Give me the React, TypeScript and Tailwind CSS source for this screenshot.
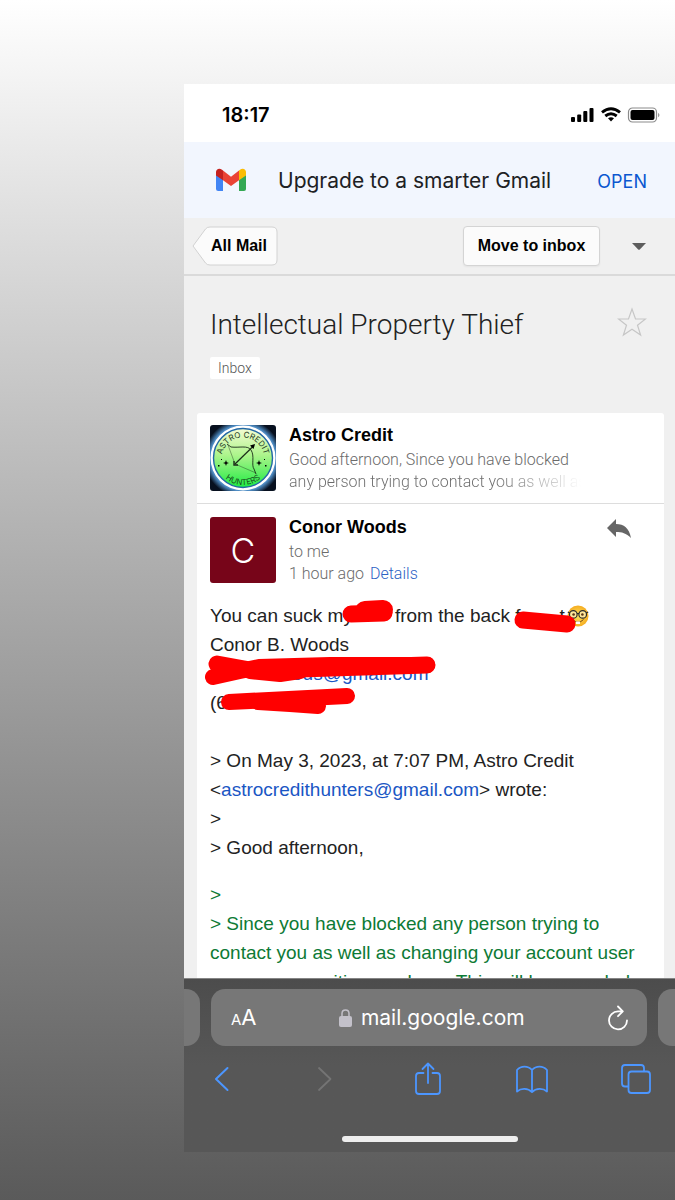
import type { ReactNode } from 'react';

function StatusBar() {
  return (
    <header className="flex h-[58px] shrink-0 items-center justify-between bg-white pl-[38px] pr-[15px] pt-[3px]">
      <time className="font-['Inter'] text-[20px] font-semibold leading-6 text-black">18:17</time>
      <div className="flex items-center gap-[6px]">
        <svg width="24" height="16" viewBox="0 0 24 16" aria-label="Signal">
          <rect x="0" y="10" width="4" height="5" rx="1" />
          <rect x="6.2" y="7.5" width="4" height="7.5" rx="1" />
          <rect x="12.3" y="4" width="4" height="11" rx="1" />
          <rect x="18.5" y="1" width="4" height="14" rx="1" />
        </svg>
        <svg width="20" height="16" viewBox="0 0 20 16" fill="none" stroke="#000" strokeWidth="2.9" aria-label="Wi-Fi">
          <path d="M1 5.4Q10-2 19 5.4" />
          <path d="M4.3 9Q10 4.4 15.7 9" />
          <path d="M7 11.3Q10 9 13 11.3L10 14.6Z" fill="#000" stroke="none" />
        </svg>
        <svg width="33" height="16" viewBox="0 0 33 16" aria-label="Battery">
          <rect x="1.5" y="1" width="28" height="14" rx="4" fill="none" stroke="#8b8b8b" strokeWidth="1.2" />
          <rect x="3.5" y="3" width="24" height="10" rx="2" />
          <path d="M31 5.7Q34 8 31 10.3Z" fill="#999" />
        </svg>
      </div>
    </header>
  );
}

function GmailLogo() {
  return (
    <svg width="30" height="24" viewBox="0 0 30 24" aria-label="Gmail">
      <path d="M0 6L7 11V23H2.2Q0 23 0 21Z" fill="#4285f4" />
      <path d="M23 11L30 6V21Q30 23 28 23H23Z" fill="#34a853" />
      <path d="M0 8V4C0 .8 3.5-.4 6 1.7L7 2.5V12.3L0 7.5Z" fill="#c5221f" />
      <path d="M23 2.5L24 1.7C26.5-.4 30 .8 30 4V7.5L23 12.3Z" fill="#fbbc04" />
      <path d="M7 2.5L15 8.8L23 2.5V12.3L15 18L7 12.3Z" fill="#ea4335" />
    </svg>
  );
}

function UpgradeBanner() {
  return (
    <div className="flex h-[76px] shrink-0 items-center bg-[#f2f6fe] pl-8 pr-7">
      <GmailLogo />
      <p className="ml-8 flex-1 whitespace-nowrap pt-[2px] font-['Inter'] text-[21px] leading-7 text-[#202124]">
        Upgrade to a smarter Gmail
      </p>
      <button className="pt-1 font-['Inter'] text-[18px] leading-6 text-[#0b57d0]">OPEN</button>
    </div>
  );
}

function Toolbar() {
  return (
    <nav className="flex h-[58px] shrink-0 items-center border-b-2 border-[#dadada] pl-2 pr-[29px]">
      <button className="relative h-10 w-[86px] pl-2 text-[16px] font-bold text-black">
        <svg className="absolute inset-0" width="86" height="40" viewBox="0 0 86 40" aria-hidden="true">
          <path
            d="M1 20L13.5 3Q15 1 18 1H80Q85 1 85 6V34Q85 39 80 39H18Q15 39 13.5 37Z"
            fill="#fbfbfb"
            stroke="#d2d2d2"
          />
        </svg>
        <span className="relative">All Mail</span>
      </button>
      <button className="ml-auto h-10 w-[137px] rounded-[4px] border border-[#d4d4d4] bg-[#fbfbfb] text-[16px] font-bold text-black shadow-xs">
        Move to inbox
      </button>
      <button className="ml-8 flex h-10 w-[14px] items-center" aria-label="More actions">
        <svg width="14" height="7" viewBox="0 0 14 7">
          <path d="M0 0H14L7.8 6.4Q7 7 6.2 6.4Z" fill="#5d5d5d" />
        </svg>
      </button>
    </nav>
  );
}

function Subject() {
  return (
    <section className="flex justify-between pb-[33px] pl-[26px] pr-7 pt-[31px]">
      <div>
        <h1 className="whitespace-nowrap font-['Roboto'] text-[28px] font-light leading-9 text-[#222]">Intellectual Property Thief</h1>
        <span className="mt-[14px] inline-block h-[22px] rounded-[2px] bg-white px-2 font-['Roboto'] text-[14px] font-light leading-[22px] text-[#555]">
          Inbox
        </span>
      </div>
      <button className="h-7 w-[30px]" aria-label="Star">
        <svg width="30" height="30" viewBox="0 0 30 30" fill="none" stroke="#c6c6c6" strokeWidth="1.2">
          <path d="M15 2L18.5 12H28.5L20.5 18.2L23.6 28L15 22.2L6.4 28L9.5 18.2L1.5 12H11.5Z" />
        </svg>
      </button>
    </section>
  );
}

function AstroAvatar() {
  return (
    <svg className="shrink-0 rounded-[3px]" width="66" height="66" viewBox="0 0 66 66" aria-label="Astro Credit Hunters">
      <defs>
        <radialGradient id="glow">
          <stop offset="0.85" stopColor="#4e8cc4" />
          <stop offset="1" stopColor="#07101f" />
        </radialGradient>
        <linearGradient id="disc" x2="0" y2="1">
          <stop stopColor="#f4fbd2" />
          <stop offset="0.45" stopColor="#adf48c" />
          <stop offset="1" stopColor="#1eeb43" />
        </linearGradient>
        <path id="arcTop" d="M11.5 34A21.5 21.5 0 0 1 54.5 34" />
        <path id="arcBottom" d="M6 33A27 27 0 0 0 60 33" />
      </defs>
      <rect width="66" height="66" fill="#07101f" />
      <circle cx="33" cy="33" r="39" fill="url(#glow)" />
      <circle cx="33" cy="33" r="32.5" fill="#fff" />
      <circle cx="33" cy="33" r="29.5" fill="url(#disc)" stroke="#2368a5" strokeWidth="1.4" />
      <text fontFamily="Inter" fontSize="8" fill="#243a24" textAnchor="middle">
        <textPath href="#arcTop" startOffset="50%">ASTRO CREDIT</textPath>
      </text>
      <text fontFamily="Inter" fontSize="8" fill="#164d1d" textAnchor="middle">
        <textPath href="#arcBottom" startOffset="50%">HUNTERS</textPath>
      </text>
      <g fill="none" stroke="#1a2b19" strokeWidth="0.9">
        <path d="M25 39L44 20.5" strokeWidth="1.2" />
        <path d="M18 20L25 39L46 48" strokeWidth="0.4" />
        <path d="M17 19L21 22C29 23 38 20 41 25C45 31 41 40 44 44L46 49" />
        <path d="M24 36V40H28" strokeWidth="1.4" />
      </g>
      <path d="M45 19L43.5 24L40 20.5ZM16 35L16.8 37.2L19 38L16.8 38.8L16 41L15.2 38.8L13 38L15.2 37.2ZM49 35L49.8 37.2L52 38L49.8 38.8L49 41L48.2 38.8L46 38L48.2 37.2Z" />
      <path d="M8 40h1.5v1.5H8ZM11 34h1v1h-1ZM55 40h1.5v1.5H55ZM54 34h1v1h-1Z" />
    </svg>
  );
}

function MessagePreview() {
  return (
    <article className="flex gap-[13px] border-b border-[#ddd] px-[13px] pb-[10px] pt-3">
      <AstroAvatar />
      <div className="min-w-0 flex-1">
        <h2 className="text-[18px] font-bold leading-5 text-black">Astro Credit</h2>
        <p className="mt-1 w-[292px] font-['Roboto'] text-[16px] font-light leading-[22px] text-[#6b6b6b]">
          <span className="block whitespace-nowrap">Good afternoon, Since you have blocked</span>
          <span className="block whitespace-nowrap bg-linear-to-r from-[#6b6b6b] from-70% to-white bg-clip-text text-transparent">
            any person trying to contact you as well as
          </span>
        </p>
      </div>
    </article>
  );
}

function NerdFace() {
  return (
    <svg className="ml-[2px] inline-block align-[-5px]" width="22" height="22" viewBox="0 0 22 22" role="img" aria-label="nerd face">
      <defs>
        <radialGradient id="face">
          <stop stopColor="#ffe45c" />
          <stop offset="1" stopColor="#f5ad22" />
        </radialGradient>
      </defs>
      <circle cx="11" cy="11" r="10.5" fill="url(#face)" />
      <g fill="#ffe79b" stroke="#292929" strokeWidth="1.2">
        <circle cx="6.3" cy="9.4" r="3.8" />
        <circle cx="15.7" cy="9.4" r="3.8" />
        <path d="M10 8.5H12M.8 7L2.8 8M21.2 7L19.2 8" fill="none" />
      </g>
      <circle cx="6.6" cy="9.5" r="1.3" fill="#5b3517" />
      <circle cx="15.4" cy="9.5" r="1.3" fill="#5b3517" />
      <path d="M5.5 14.5Q11 20 16.5 14.5" fill="none" stroke="#744214" />
      <path d="M9 16.5H13V19H9Z" fill="#fff" />
    </svg>
  );
}

function Line({ children }: { children?: ReactNode }) {
  return <div className="h-[29px] whitespace-nowrap">{children}</div>;
}

function Redactions() {
  return (
    <svg className="absolute left-0 top-0" width="467" height="130" viewBox="197 595 467 130" fill="none" aria-hidden="true">
      <g stroke="#f00" strokeLinecap="round" strokeLinejoin="round">
        <path d="M365 611L383 610" strokeWidth="20" />
        <path d="M351 614L384 613" strokeWidth="17" />
        <path d="M523 620L567 624" strokeWidth="17" />
        <path d="M217 664L250 670L300 669L427 665" strokeWidth="17" />
        <path d="M213 677L240 671L259 667L330 665L427 665" strokeWidth="16" />
        <path d="M250 671L280 674L300 671" strokeWidth="16" />
        <path d="M229 702L347 696" strokeWidth="16" />
        <path d="M258 702L290 704L318 706" strokeWidth="16" />
      </g>
    </svg>
  );
}

function MessageBody() {
  return (
    <div className="relative -mt-[1px] px-[13px] pt-[6px] text-[19px] leading-[29px] text-[#222]">
      <Line>
        You can suck my
        <span className="inline-block w-[42px]" />
        from the back f
        <span className="inline-block w-[39px]" />t
        <NerdFace />
      </Line>
      <Line>Conor B. Woods</Line>
      <Line>
        <span className="inline-block w-[82px]" />
        <span className="text-[#1a56c4]">ods@gmail.com</span>
      </Line>
      <Line>(6</Line>
      <Line />
      <Line>&gt; On May 3, 2023, at 7:07 PM, Astro Credit</Line>
      <Line>
        &lt;
        <a href="mailto:astrocredithunters@gmail.com" className="text-[#1a56c4]">
          astrocredithunters@gmail.com
        </a>
        &gt; wrote:
      </Line>
      <Line>&gt;</Line>
      <Line>&gt; Good afternoon,</Line>
      <div className="mt-[18px] text-[#0d7a35]">
        <Line>&gt;</Line>
        <Line>&gt; Since you have blocked any person trying to</Line>
        <Line>contact you as well as changing your account user</Line>
        <Line>name across cities nowhere. This will be recorded</Line>
      </div>
      <Redactions />
    </div>
  );
}

function OpenMessage() {
  return (
    <article>
      <div className="flex gap-[13px] px-[13px] pb-[11px] pt-[13px]">
        <div className="flex size-[66px] shrink-0 items-center justify-center rounded-[3px] bg-[#770519] font-['Inter'] text-[34px] font-light text-white">
          C
        </div>
        <div className="min-w-0 flex-1">
          <h2 className="text-[18px] font-bold leading-5 text-black">Conor Woods</h2>
          <p className="mt-1 font-['Roboto'] text-[16px] font-light leading-[22px] text-[#6b6b6b]">to me</p>
          <p className="font-['Roboto'] text-[16px] font-light leading-[22px] text-[#6b6b6b]">
            1 hour ago{' '}
            <a href="#details" className="ml-[2px] text-[#2c62c4]">
              Details
            </a>
          </p>
        </div>
        <button className="mr-5 h-6 w-6" aria-label="Reply">
          <svg width="24" height="20" viewBox="0 0 24 20">
            <path d="M9 0V5C17 5 22 9 24 19C19 14 15 13 9 13V18L0 9Z" fill="#666" />
          </svg>
        </button>
      </div>
      <MessageBody />
    </article>
  );
}

function BrowserBar() {
  return (
    <footer className="shrink-0 border-t border-[#858585] bg-linear-to-b from-[#4c4c4c] to-[#575757] to-50% pb-[10px] text-white">
      <div className="flex gap-[11px] pt-[10px]">
        <div className="h-[57px] w-4 shrink-0 rounded-r-[14px] bg-[#777]" />
        <div className="flex h-[57px] min-w-0 flex-1 items-center rounded-[14px] bg-[#777] pl-5 pr-[18px] font-['Inter']">
          <button className="flex items-baseline" aria-label="Page settings">
            <span className="text-[15px]">A</span>
            <span className="text-[22px]">A</span>
          </button>
          <div className="flex flex-1 items-center justify-center gap-[9px]">
            <svg width="13" height="18" viewBox="0 0 13 18" fill="#c3c1ca" aria-hidden="true">
              <rect y="7" width="13" height="11" rx="2" />
              <path d="M3 8V4.5C3-.2 10-.2 10 4.5V8" fill="none" stroke="#c3c1ca" strokeWidth="1.5" />
            </svg>
            <span className="text-[21px]">mail.google.com</span>
          </div>
          <button aria-label="Reload">
            <svg width="22" height="26" viewBox="0 0 22 26" fill="none" stroke="#fff" strokeWidth="1.8" strokeLinecap="round" strokeLinejoin="round">
              <path d="M15.5 6.4H11A9 9 0 1 0 20 15.5M11 1.5L15.8 6.4L11 11.2" />
            </svg>
          </button>
        </div>
        <div className="h-[57px] w-[17px] shrink-0 rounded-l-[14px] bg-[#777]" />
      </div>
      <nav className="mt-[15px] flex h-9 items-center justify-between pl-[22px] pr-6 text-[#4c96ff]">
        <button className="flex w-[30px] justify-center" aria-label="Back">
          <svg width="15" height="26" viewBox="0 0 15 26" fill="none" stroke="currentColor" strokeWidth="2" strokeLinecap="round" strokeLinejoin="round">
            <path d="M13.5 2L2 13L13.5 24" />
          </svg>
        </button>
        <button className="flex w-[30px] justify-center text-[#747474]" aria-label="Forward">
          <svg width="15" height="26" viewBox="0 0 15 26" fill="none" stroke="currentColor" strokeWidth="1.8" strokeLinecap="round" strokeLinejoin="round">
            <path d="M2 2L13.5 13L2 24" />
          </svg>
        </button>
        <button className="flex w-[30px] justify-center" aria-label="Share">
          <svg width="26" height="34" viewBox="0 0 26 34" fill="none" stroke="currentColor" strokeWidth="1.8" strokeLinecap="round" strokeLinejoin="round">
            <path d="M8.5 11H4Q1 11 1 14V29Q1 32 4 32H22Q25 32 25 29V14Q25 11 22 11H17.5M13 21V1.5M7.5 7L13 1.5L18.5 7" />
          </svg>
        </button>
        <button className="flex w-[32px] justify-center" aria-label="Bookmarks">
          <svg width="32" height="28" viewBox="0 0 32 28" fill="none" stroke="currentColor" strokeWidth="1.8" strokeLinejoin="round">
            <path d="M16 5C12 .5 5 .5 1 5V26.5C5 23 12 23 16 27C20 23 27 23 31 26.5V5C27 .5 20 .5 16 5V27" />
          </svg>
        </button>
        <button className="flex w-[30px] justify-center" aria-label="Tabs">
          <svg width="30" height="30" viewBox="0 0 30 30" fill="none" stroke="currentColor" strokeWidth="1.8">
            <path d="M7.5 22.5H4Q1 22.5 1 19.5V4Q1 1 4 1H20Q23 1 23 4V7.5" />
            <rect x="7.5" y="7.5" width="21.5" height="21.5" rx="3" />
          </svg>
        </button>
      </nav>
      <div className="mx-auto mt-[39px] h-[6px] w-[176px] rounded-full bg-[#eee]" />
    </footer>
  );
}

export default function App() {
  return (
    <div className="flex h-screen flex-col bg-linear-to-b from-white to-[#5a5a5a] pb-12 pl-[184px] pt-[84px] font-['Liberation_Sans',sans-serif]">
      <div className="flex min-h-0 flex-1 flex-col bg-[#f0f0f0]">
        <StatusBar />
        <UpgradeBanner />
        <main className="flex min-h-0 flex-1 flex-col overflow-hidden">
          <Toolbar />
          <Subject />
          <div className="ml-[13px] mr-[11px] min-h-0 flex-1 overflow-hidden rounded-t-[3px] bg-white">
            <MessagePreview />
            <OpenMessage />
          </div>
        </main>
        <BrowserBar />
      </div>
    </div>
  );
}
